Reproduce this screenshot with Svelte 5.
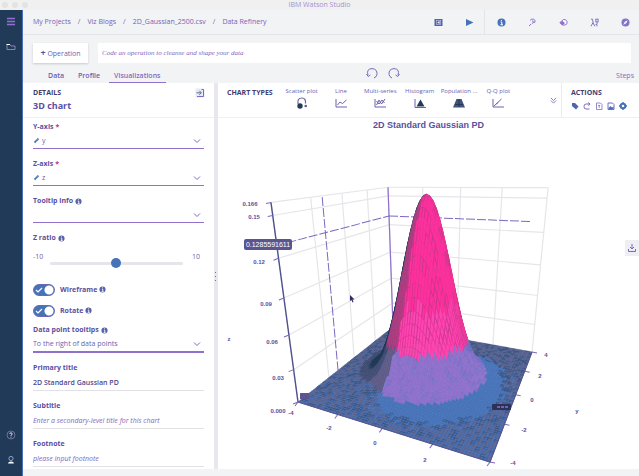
<script>
  let tab = $state('Visualizations')
  let operation = $state('')
  let ratio = $state(0)
  let wireframe = $state(true)
  let rotate = $state(true)
  let primaryTitle = $state('2D Standard Gaussian PD')
  let subtitle = $state('')
  let footnote = $state('')

  const crumbs = ['My Projects', 'Viz Blogs', '2D_Gaussian_2500.csv', 'Data Refinery']
  const tabs = ['Data', 'Profile', 'Visualizations']
  const chartTypes = ['Scatter plot', 'Line', 'Multi-series', 'Histogram', 'Population ...', 'Q-Q plot']
  const actions = ['tag', 'refresh', 'upload', 'image', 'settings']

  // perspective projection of the unit cube, x goes back, y goes to the front right
  function project(x, y, z) {
    const w = 1 + 0.4468 * x - 0.2166 * y - 0.169 * z
    return [
      (80 + 173.2 * x + 133.1 * y - 36 * z) / w,
      (270 + 12.1 * x - 11.5 * y - 211.5 * z) / w
    ]
  }

  function line(from, to) {
    const a = project(...from)
    const b = project(...to)
    return { x1: a[0], y1: a[1], x2: b[0], y2: b[1] }
  }

  function points(list) {
    return list.map(p => project(...p).map(n => n.toFixed(1)).join(',')).join(' ')
  }

  function gauss(x, y) {
    const u = (x - 0.5) * 8
    const v = (y - 0.5) * 8
    return Math.exp(-(u * u + v * v) / 2.1)
  }

  // small repeatable noise between 0 and 1
  function noise(i, j) {
    const n = Math.sin(i * 12.9 + j * 78.2) * 43758.5
    return n - Math.floor(n)
  }

  function colours(x, y, i, j) {
    const z = gauss(x, y)
    const n = noise(i, j)
    // how much the slope turns towards the light
    const nx = (x - 0.5) * 8 * z
    const ny = (y - 0.5) * 8 * z
    const light = (ny * 0.85 - nx * 0.5) / Math.hypot(nx, ny, 0.12)
    if (z > 0.23) {
      if (light < -0.4) return ['#203a58', '#203a58']
      if (light < 0.15) return ['#b93c84', '#a63f80']
      return [z > 0.42 + n * 0.08 ? '#ff2f9e' : '#fb46b4', n < 0.4 ? '#c93888' : '#f5349a']
    }
    if (light < -0.38) return ['#203a58', '#203a58']
    if (light < -0.16) return ['#4d5a88', '#3a4669']
    if (z > 0.035) return light < 0.1 ? ['#5d5a86', '#5d5a86'] : ['#9070cc', n < 0.3 ? '#5f72bd' : '#8a6fca']
    if (light > 0.015 + n * 0.1) return ['#4672b8', '#4672b8']
    return ['#4672b8', n < 0.7 ? '#5d5a80' : '#2f4468']
  }

  const N = 68
  const cells = []
  for (let i = N - 1; i >= 0; i--) {
    for (let j = 0; j < N; j++) {
      const x0 = i / N, x1 = (i + 1) / N
      const y0 = j / N, y1 = (j + 1) / N
      const [fill, wire] = colours((x0 + x1) / 2, (y0 + y1) / 2, i, j)
      cells.push({
        fill,
        wire,
        points: points([
          [x0, y0, gauss(x0, y0)],
          [x1, y0, gauss(x1, y0)],
          [x1, y1, gauss(x1, y1)],
          [x0, y1, gauss(x0, y1)]
        ])
      })
    }
  }

  const grid = []
  for (const t of [0, 0.25, 0.5, 0.75, 1]) {
    grid.push(line([t, 0, 0], [t, 0, 1]))
    grid.push(line([1, t, 0], [1, t, 1]))
  }
  for (const z of [0.189, 0.378, 0.567, 0.756, 0.945, 1]) {
    grid.push(line([0, 0, z], [1, 0, z]))
    grid.push(line([1, 0, z], [1, 1, z]))
  }

  const ticks = []
  for (const z of [0, 0.189, 0.378, 0.567, 0.756, 0.945, 1]) {
    const [x, y] = project(0, 0, z)
    ticks.push({ x1: x, y1: y, x2: x - 5, y2: y + (z < 0.8 ? 2 : 1) })
  }
  for (const t of [0, 0.25, 0.5, 0.75, 1]) {
    const [x, y] = project(0, t, 0)
    ticks.push({ x1: x, y1: y, x2: x - 3, y2: y + 4 })
    const [p, q] = project(t, 1, 0)
    ticks.push({ x1: p, y1: q, x2: p + 5, y2: q + 1 })
  }

  const labels = [
    [32, 74, '0.166'], [36, 87, '0.15'], [41, 132, '0.12'], [48, 174, '0.09'],
    [54, 212, '0.06'], [60, 248, '0.03'], [60, 281, '0.000'], [73, 283, '-4'],
    [111, 298, '-2'], [157, 313, '0'], [207, 330, '2'], [295, 333, '-4'],
    [306, 300, '-2'], [314, 270, '0'], [322, 246, '2'], [328, 225, '4'],
    [11, 209, 'z'], [359, 281, 'y']
  ]
</script>

{#snippet info()}
  <svg class="info" viewBox="0 0 8 8" aria-hidden="true">
    <circle cx="4" cy="4" r="3.5" fill="#5762a8" />
    <path d="M3.2 3.6H4.3V6M3 6.2H5.3M4 1.6V2.5" stroke="#fff" fill="none" />
  </svg>
{/snippet}

{#snippet chevron()}
  <svg class="chevron" viewBox="0 0 8 6" aria-hidden="true"><path d="M1 1.5L4 4.5L7 1.5" /></svg>
{/snippet}

{#snippet ruler()}
  <svg class="ruler" viewBox="0 0 8 8" aria-hidden="true">
    <path d="M1 5.5L5.5 1L7 2.5L2.5 7Z" fill="#4672b8" />
    <path d="M3 4.2L4 5.2M4.5 2.7L5.5 3.7" stroke="#fff" stroke-width=".6" />
  </svg>
{/snippet}

<div class="app">
  <div class="titlebar">
    <div class="lights"><i></i><i></i><i></i></div>
    <span>IBM Watson Studio</span>
  </div>

  <div class="body">
    <nav class="rail" aria-label="Main">
      <button aria-label="Menu">
        <svg width="10" height="10" viewBox="0 0 10 10"><path d="M1 1.5H9M1 4.5H9M1 7.5H9" stroke="#9070cc" stroke-width="1.5" /></svg>
      </button>
      <button aria-label="Projects">
        <svg width="10" height="10" viewBox="0 0 10 10">
          <path d="M1 2.5H4L5 4H9V7.5H1Z" fill="none" stroke="#8b80c0" />
          <path d="M0.5 2.5H4" stroke="#fff" />
        </svg>
      </button>
      <span class="push"></span>
      <button aria-label="Help">
        <svg width="10" height="10" viewBox="0 0 10 10">
          <circle cx="5" cy="5" r="4" fill="none" stroke="#77759f" stroke-width=".9" />
          <path d="M3.7 4Q3.7 2.8 5 2.8T6.2 4Q6 4.8 5 5.2V6M5 6.7V7.6" fill="none" stroke="#e7e6f2" stroke-width=".9" />
        </svg>
      </button>
      <button aria-label="Account">
        <svg width="10" height="10" viewBox="0 0 10 10">
          <circle cx="5" cy="3.5" r="2.1" fill="none" stroke="#8fa5cc" />
          <path d="M2 8.5Q2.2 6.5 5 6.5T8 8.5Z" fill="#fff" />
        </svg>
      </button>
    </nav>

    <div class="main">
      <header>
        <div class="crumbs">
          {#each crumbs as crumb, i}
            {#if i}<span>/</span>{/if}
            <a href="#top">{crumb}</a>
          {/each}
        </div>
        <div class="tools first">
          <button aria-label="Save">
            <svg viewBox="0 0 9 9"><rect x=".5" y="1" width="8" height="7" fill="#4c66b0" /><path d="M5.5 3L3.4 4.5L5.5 6Z" fill="#fff" /><rect x="2.3" y="2.5" width="4.4" height="4" fill="none" stroke="#c9c4e8" stroke-width=".6" /></svg>
          </button>
          <button aria-label="Run">
            <svg viewBox="0 0 9 9"><path d="M1 1L8.5 4.5L1 8Z" fill="#4672b8" /></svg>
          </button>
        </div>
        <div class="tools">
          <button aria-label="Information">
            <svg viewBox="0 0 9 9"><circle cx="4.5" cy="4.5" r="4" fill="#4672b8" /><path d="M3.6 4H4.8V6.8M3.4 6.8H6M4.4 2V3" fill="none" stroke="#fff" /></svg>
          </button>
          <button aria-label="Steps">
            <svg viewBox="0 0 9 9" fill="none" stroke="#9070cc"><path d="M2 2.4Q3 .8 5.5 1.2Q7.8 2 7 4.2Q6.5 5 5.4 4.4M4 3Q6 3 5.4 4.4L3.7 5.8M3 6.2L1 8" /></svg>
          </button>
          <button aria-label="Comments">
            <svg viewBox="0 0 9 9"><path d="M1 4.5L4.5 1.5Q7 1 8 3.5T6 7H3.5Z" fill="#fff" stroke="#9070cc" /><path d="M.5 4.7L3.5 3L6 5L3.5 7.5Z" fill="#9070cc" /></svg>
          </button>
          <button aria-label="Compare">
            <svg viewBox="0 0 9 9" fill="none" stroke="#8575c4"><path d="M1 1.2H2.6L3 4.5L1 8.3M3 4.5L4.8 8.3M2 5.5H4" /><rect x="5.8" y="1.2" width="2.3" height="2.6" /><path d="M7 4V6.5H5.5M7 7V8.3" /></svg>
          </button>
          <button aria-label="Explore">
            <svg viewBox="0 0 9 9"><circle cx="4.5" cy="4.5" r="4" fill="#8575c4" /><path d="M6.7 2.2L5.2 5.2L2.3 6.8L3.8 3.8Z" fill="#fff" /></svg>
          </button>
        </div>
      </header>

      <div class="operation">
        <button><b>+</b> Operation</button>
        <input aria-label="Operation code" placeholder="Code an operation to cleanse and shape your data" bind:value={operation} />
      </div>

      <div class="tabs">
        {#each tabs as name}
          <button class:active={tab == name} onclick={() => tab = name}>{name}</button>
        {/each}
        <div class="history">
          <button aria-label="Undo">
            <svg viewBox="0 0 13 13"><path d="M2 8Q0 2 6 1.6Q11.5 2 11 7.5Q10.5 10 8 11M.5 7L2.2 9.5L4.4 8" /></svg>
          </button>
          <button aria-label="Redo">
            <svg viewBox="0 0 13 13"><path d="M11 8Q13 2 7 1.6Q1.5 2 2 7.5Q2.5 10 5 11M12.5 7L10.8 9.5L8.6 8" /></svg>
          </button>
        </div>
        <a class="steps" href="#steps">Steps</a>
      </div>

      <div class="content">
        <section class="details">
          <div class="details-head">
            <div>
              <h3>DETAILS</h3>
              <h2>3D chart</h2>
            </div>
            <button aria-label="Collapse panel">
              <svg width="10" height="10" viewBox="0 0 10 10"><rect x=".5" y=".5" width="9" height="9" fill="#e9e9ee" /><path d="M6.5 1.5H8.5V8.5H2" fill="none" stroke="#7b6cc0" /><path d="M1.5 4.8H6M4.3 2.8L6.3 4.8L4.3 6.8" fill="none" stroke="#4672b8" /></svg>
            </button>
          </div>

          <form>
            <div class="field">
              <label for="yaxis">Y-axis <em>*</em></label>
              <div class="control">
                {@render ruler()}
                <select id="yaxis"><option>y</option></select>
                {@render chevron()}
              </div>
            </div>
            <div class="field">
              <label for="zaxis">Z-axis <em>*</em></label>
              <div class="control">
                {@render ruler()}
                <select id="zaxis"><option>z</option></select>
                {@render chevron()}
              </div>
            </div>
            <div class="field">
              <label for="tip">Tooltip info {@render info()}</label>
              <div class="control">
                <select id="tip"><option></option></select>
                {@render chevron()}
              </div>
            </div>
            <div class="field">
              <label for="ratio">Z ratio {@render info()}</label>
              <div class="slider">
                <span>-10</span>
                <input id="ratio" type="range" min="-10" max="10" bind:value={ratio} />
                <span>10</span>
              </div>
            </div>
            <label class="toggle">
              <input type="checkbox" bind:checked={wireframe} />
              <i><svg viewBox="0 0 8 8"><path d="M1 4L3 6L7 2" /></svg></i>
              Wireframe {@render info()}
            </label>
            <label class="toggle">
              <input type="checkbox" bind:checked={rotate} />
              <i><svg viewBox="0 0 8 8"><path d="M1 4L3 6L7 2" /></svg></i>
              Rotate {@render info()}
            </label>
            <div class="field">
              <label for="pos">Data point tooltips {@render info()}</label>
              <div class="control focus">
                <select id="pos"><option>To the right of data points</option></select>
                {@render chevron()}
              </div>
            </div>
            <div class="field text">
              <label for="title">Primary title</label>
              <input id="title" bind:value={primaryTitle} />
            </div>
            <div class="field text">
              <label for="subtitle">Subtitle</label>
              <input id="subtitle" placeholder="Enter a secondary-level title for this chart" bind:value={subtitle} />
            </div>
            <div class="field text">
              <label for="footnote">Footnote</label>
              <input id="footnote" placeholder="please input footnote" bind:value={footnote} />
            </div>
          </form>
        </section>

        <div class="splitter"><i></i><i></i><i></i></div>

        <section class="visual">
          <div class="types">
            <h3>CHART TYPES</h3>
            <div class="list">
              {#each chartTypes as type, i}
                <button>
                  <span>{type}</span>
                  <svg viewBox="0 0 12 12" fill="none" stroke="#6a62ad">
                    {#if i == 0}
                      <path d="M2 7Q1 1 6 1Q10 1 9.500 6.500" stroke-width="1.200" />
                      <circle cx="4" cy="9" r="2.700" fill="#203a58" stroke="none" />
                      <circle cx="9.700" cy="9" r="1.300" fill="#5d5a90" stroke="none" />
                    {:else if i == 1}
                      <path d="M1 2V10H12M2.500 8L5 5L7.500 6.500L11.500 3" />
                    {:else if i == 2}
                      <path d="M1 2V10H12M2.500 8L5 3L7.500 7L11 2M2.500 4L5 7L8 3L10.500 6" />
                    {:else if i == 3}
                      <path d="M1 2V10.500H12" />
                      <path d="M2.500 9.500L6.500 2.500L10.500 9.500Z" fill="#203a58" stroke="none" />
                    {:else if i == 4}
                      <path d="M3.500 2H8.500L12 10.500H0Z" fill="#45527e" stroke="none" />
                      <path d="M6 2V10M2 7.500H10" stroke="#203a58" />
                    {:else}
                      <path d="M1 2V10H12M2 9L9.500 2M4 7.500L6 5.500" />
                    {/if}
                  </svg>
                </button>
              {/each}
            </div>
            <button class="more" aria-label="More chart types">
              <svg viewBox="0 0 8 8"><path d="M1 1L4 4L7 1M1 4L4 7L7 4" /></svg>
            </button>
            <div class="actions">
              <h3>ACTIONS</h3>
              <div>
                {#each actions as action}
                  <button aria-label={action}>
                    <svg viewBox="0 0 8 8" fill="none" stroke="#7b6cc0">
                      {#if action == 'tag'}
                        <path d="M1 1H4L7.500 4.500L5 7.500L1 4Z" fill="#4c66b0" stroke="none" />
                      {:else if action == 'refresh'}
                        <path d="M6.500 2H3Q1 2 1 4.500T3 7H6.500M5 .500L7 2L5.500 3.800" />
                      {:else if action == 'upload'}
                        <path d="M1.500 1H5.500L7 2.500V7.500H1.500ZM4.200 6V3M3.200 4L4.200 3L5.200 4" stroke-width=".8" />
                      {:else if action == 'image'}
                        <path d="M1 1H5.500L7 2.500V7.500H1Z" />
                        <path d="M1.500 6L3.500 4L5 5.500L6.500 4.500V7H1.500Z" fill="#4672b8" stroke="none" />
                      {:else}
                        <circle cx="4" cy="4" r="2.300" stroke="#4672b8" stroke-width="2" />
                        <path d="M4 0V1M4 7V8M0 4H1M7 4H8" stroke="#4672b8" stroke-width="1.500" />
                      {/if}
                    </svg>
                  </button>
                {/each}
              </div>
            </div>
          </div>

          <h2 class="chart-title">{primaryTitle}</h2>

          <svg class="plot" viewBox="0 0 421 335" role="img" aria-label="3D surface of a gaussian distribution">
            <g stroke="#e6e6ea" stroke-width="1.200">
              {#each grid as l}<line {...l} />{/each}
            </g>
            <line {...line([0, 0, 0], [0, 0, 1])} stroke="#51508f" stroke-width="1.400" />
            <line {...line([1, 0, 0], [1, 0, 1])} stroke="#9070cc" stroke-width="1.200" />
            <g stroke="#7d68c0" stroke-dasharray="9 2">
              <line {...line([0.335, 0, 0], [0.335, 0, 1])} />
              <line {...line([0, 0, 0.814], [1, 0, 0.814])} />
              <line {...line([1, 0, 0.814], [1, 0.93, 0.814])} />
            </g>
            <g stroke="#7d68c0">
              {#each ticks as l}<line {...l} />{/each}
            </g>
            <g stroke-width=".6" stroke-linejoin="round">
              {#each cells as cell}
                <polygon points={cell.points} fill={cell.fill} stroke={wireframe ? cell.wire : cell.fill} />
              {/each}
            </g>
            <polyline points={points([[0, 0, 0], [0, 1, 0], [1, 1, 0]])} fill="none" stroke="#5a5490" />
            <rect x="82" y="261" width="9" height="6" fill="#5a5490" />
            <rect x="274" y="272" width="19" height="6" rx="1" fill="#2c3158" />
            <path d="M279 275H291" stroke="#9070cc" stroke-width="1.500" stroke-dasharray="3 1" />
            <g class="labels">
              {#each labels as [x, y, text]}<text {x} {y}>{text}</text>{/each}
            </g>
            <rect x="26" y="107" width="48" height="11" rx="2" fill="#5a5490" />
            <text class="value" x="50" y="115">0.1285591611</text>
            <path d="M132 163V169L133.500 168L134.500 170.500L135.500 170L134.500 167.500H136.500Z" fill="#2c2b66" />
          </svg>

          <button class="download" aria-label="Download chart">
            <svg viewBox="0 0 8 8"><path d="M4 0V5M2 3L4 5L6 3M.500 5V7.500H7.500V5" /></svg>
          </button>
        </section>
      </div>
    </div>
  </div>
</div>

<style>
  :global(body) {
    margin: 0;
    background: #f2f3f4;
  }
  .app {
    min-height: 100vh;
    display: flex;
    flex-direction: column;
    font: 7px/10px "Open Sans", "Noto Sans", sans-serif;
    color: #6a5fae;
  }
  button, input, select {
    font: inherit;
    color: inherit;
    background: none;
    border: 0;
    padding: 0;
    margin: 0;
    outline: 0;
    min-width: 0;
  }
  a {
    color: inherit;
    text-decoration: none;
  }
  svg {
    display: block;
  }
  h2, h3 {
    margin: 0;
  }
  h3 {
    font-size: 7px;
    line-height: 10px;
    color: #3f3d72;
  }

  .titlebar {
    height: 10px;
    background: #f1f0f1;
    display: grid;
    grid-template-columns: 1fr auto 1fr;
    color: #a093cf;
  }
  .lights {
    display: flex;
    gap: 4px;
    padding: 2px;
  }
  .lights i {
    width: 6px;
    height: 6px;
    border-radius: 50%;
    background: #e3e3e4;
  }

  .body {
    flex: 1;
    display: flex;
  }
  .rail {
    width: 22px;
    background: #203a58;
    border-right: 1px solid #4672b8;
    display: flex;
    flex-direction: column;
    align-items: center;
    gap: 15px;
    padding: 7px 0 12px;
  }
  .push {
    flex: 1;
  }
  .main {
    flex: 1;
    min-width: 0;
    display: flex;
    flex-direction: column;
    padding-bottom: 8px;
  }

  header {
    height: 24px;
    display: flex;
    align-items: stretch;
    border-bottom: 1px solid #e4e5e8;
    padding: 0 9px 0 10px;
  }
  .crumbs {
    flex: 1;
    display: flex;
    align-items: center;
    gap: 7px;
    color: #7463b6;
  }
  .tools {
    display: flex;
    align-items: center;
    gap: 22px;
    padding-left: 12px;
    border-left: 1px solid #e4e5e8;
  }
  .tools.first {
    border: 0;
    padding: 0 10px 0 0;
  }
  .tools svg {
    width: 9px;
    height: 9px;
  }

  .operation {
    display: flex;
    gap: 10px;
    padding: 8px 8px 0 10px;
  }
  .operation button {
    width: 55px;
    height: 20px;
    background: #fff;
    box-shadow: 0 1px 2px #c9cad0;
  }
  .operation b {
    font-size: 9px;
    color: #4c55a5;
  }
  .operation input {
    flex: 1;
    background: #fff;
    padding: 0 4px;
    font: italic 7px "Liberation Serif", serif;
  }
  input::placeholder {
    color: #8069c2;
    opacity: 1;
  }

  .tabs {
    height: 20px;
    display: flex;
    align-items: center;
    padding: 0 5px 0 20px;
  }
  .tabs > button {
    height: 20px;
    padding: 8px 5px 1px;
    margin-right: 4px;
    box-sizing: border-box;
    font-weight: 600;
    border-bottom: 1px solid transparent;
  }
  .tabs > button.active {
    border-color: #9070cc;
    color: #8069c2;
    margin: 0;
  }
  .history {
    flex: 1;
    display: flex;
    justify-content: center;
    gap: 8px;
    padding-right: 16px;
  }
  .history svg {
    width: 13px;
    height: 13px;
    fill: none;
    stroke: #7d68c0;
  }
  .steps {
    color: #8069c2;
    padding-top: 5px;
  }

  .content {
    flex: 1;
    display: flex;
    background: #fff;
  }
  .details {
    flex: 0 0 31%;
  }
  .details-head {
    display: flex;
    justify-content: space-between;
    align-items: flex-start;
    padding: 5px 9px 3px 10px;
    height: 26px;
    border-bottom: 1px solid #f0f0f2;
  }
  .details-head h2 {
    font-size: 9px;
    line-height: 16px;
    color: #5a4fa0;
  }
  form {
    padding: 4px 10px 2px;
    display: flex;
    flex-direction: column;
  }
  .field {
    margin-bottom: 10px;
    display: flex;
    flex-direction: column;
    gap: 1px;
  }
  .field:last-child {
    margin: 0;
  }
  .field label, .toggle {
    display: flex;
    align-items: center;
    gap: 2px;
    font-weight: 700;
    font-size: 7px;
    color: #5a4fa0;
  }
  em {
    color: #c0308c;
    font-style: normal;
  }
  .info {
    width: 7px;
    height: 7px;
  }
  .control {
    display: flex;
    align-items: center;
    gap: 2px;
    height: 15px;
    padding-right: 3px;
    border-bottom: 1px solid #9070cc;
  }
  .control.focus {
    border-bottom-width: 2px;
  }
  .control select {
    flex: 1;
    appearance: none;
  }
  .ruler {
    width: 7px;
    height: 7px;
  }
  .chevron {
    width: 8px;
    height: 6px;
    fill: none;
    stroke: #8069c2;
    pointer-events: none;
  }
  .slider {
    display: flex;
    align-items: center;
    height: 29px;
    padding-right: 4px;
  }
  .slider span {
    flex: 0 0 17px;
    align-self: flex-start;
    padding-top: 8px;
  }
  .slider span:last-child {
    text-align: right;
  }
  .slider input {
    flex: 1;
    height: 10px;
    padding-top: 9px;
    appearance: none;
  }
  .slider input::-webkit-slider-runnable-track {
    height: 3px;
    border-radius: 2px;
    background: #e6e6ea;
  }
  .slider input::-webkit-slider-thumb {
    appearance: none;
    width: 10px;
    height: 10px;
    margin-top: -4px;
    border-radius: 50%;
    background: #4672b8;
  }
  .toggle {
    height: 13px;
    margin-bottom: 8px;
    position: relative;
  }
  .toggle input {
    position: absolute;
    opacity: 0;
  }
  .toggle i {
    width: 22px;
    height: 12px;
    margin-right: 3px;
    box-sizing: border-box;
    border: 1px solid #6a68b4;
    border-radius: 6px;
    background: radial-gradient(circle at 5px 5px, #fff 4px, #9aa0b8 5px);
    display: flex;
    align-items: center;
    padding-left: 1px;
  }
  .toggle input:checked + i {
    background: radial-gradient(circle at 15px 5px, #fff 4px, #4672b8 5px);
  }
  .toggle i svg {
    width: 8px;
    height: 8px;
    fill: none;
    stroke: #fff;
    stroke-width: 1.2;
  }
  .toggle input:not(:checked) + i svg {
    visibility: hidden;
  }
  .text input {
    height: 16px;
    border-bottom: 1px solid #e2e2e6;
    color: #4f478f;
    font-weight: 600;
  }
  .text input::placeholder {
    font-style: italic;
    font-weight: 400;
  }

  .splitter {
    width: 4px;
    background: #e7e7ec;
    display: flex;
    flex-direction: column;
    align-items: center;
    justify-content: center;
    gap: 3px;
  }
  .splitter i {
    width: 1px;
    height: 1px;
    background: #7d68c0;
  }

  .visual {
    flex: 1;
    min-width: 0;
    position: relative;
  }
  .types {
    height: 34px;
    display: flex;
    border-bottom: 1px solid #f0f0f2;
  }
  .types > h3 {
    padding: 5px 0 0 9px;
    flex: 0 0 55px;
  }
  .list {
    flex: 1;
    display: flex;
  }
  .list button {
    flex: 1;
    display: flex;
    flex-direction: column;
    align-items: center;
    justify-content: flex-start;
    gap: 1px;
    padding-top: 4px;
    font-size: 6px;
    line-height: 9px;
    white-space: nowrap;
  }
  .list svg {
    width: 12px;
    height: 12px;
  }
  .more {
    padding: 0 4px 0 32px;
  }
  .more svg {
    width: 7px;
    height: 7px;
    fill: none;
    stroke: #8069c2;
  }
  .actions {
    border-left: 1px solid #ececef;
    padding: 5px 12px 0 9px;
  }
  .actions > div {
    display: flex;
    gap: 4px;
    padding-top: 4px;
  }
  .actions svg {
    width: 8px;
    height: 8px;
  }
  .chart-title {
    font: bold 9px/14px "Liberation Sans", sans-serif;
    text-align: center;
    color: #5a4fa0;
  }
  .plot {
    width: 100%;
  }
  .labels {
    font: bold 6px "Liberation Sans", sans-serif;
    fill: #5a4fa0;
    text-anchor: middle;
  }
  .value {
    font: 7px "Liberation Sans", sans-serif;
    fill: #fff;
    text-anchor: middle;
  }
  .download {
    position: absolute;
    right: 0;
    top: 157px;
    width: 14px;
    height: 16px;
    background: #efeff3;
    display: flex;
    align-items: center;
    justify-content: center;
  }
  .download svg {
    width: 8px;
    height: 8px;
    fill: none;
    stroke: #7d68c0;
  }
</style>
